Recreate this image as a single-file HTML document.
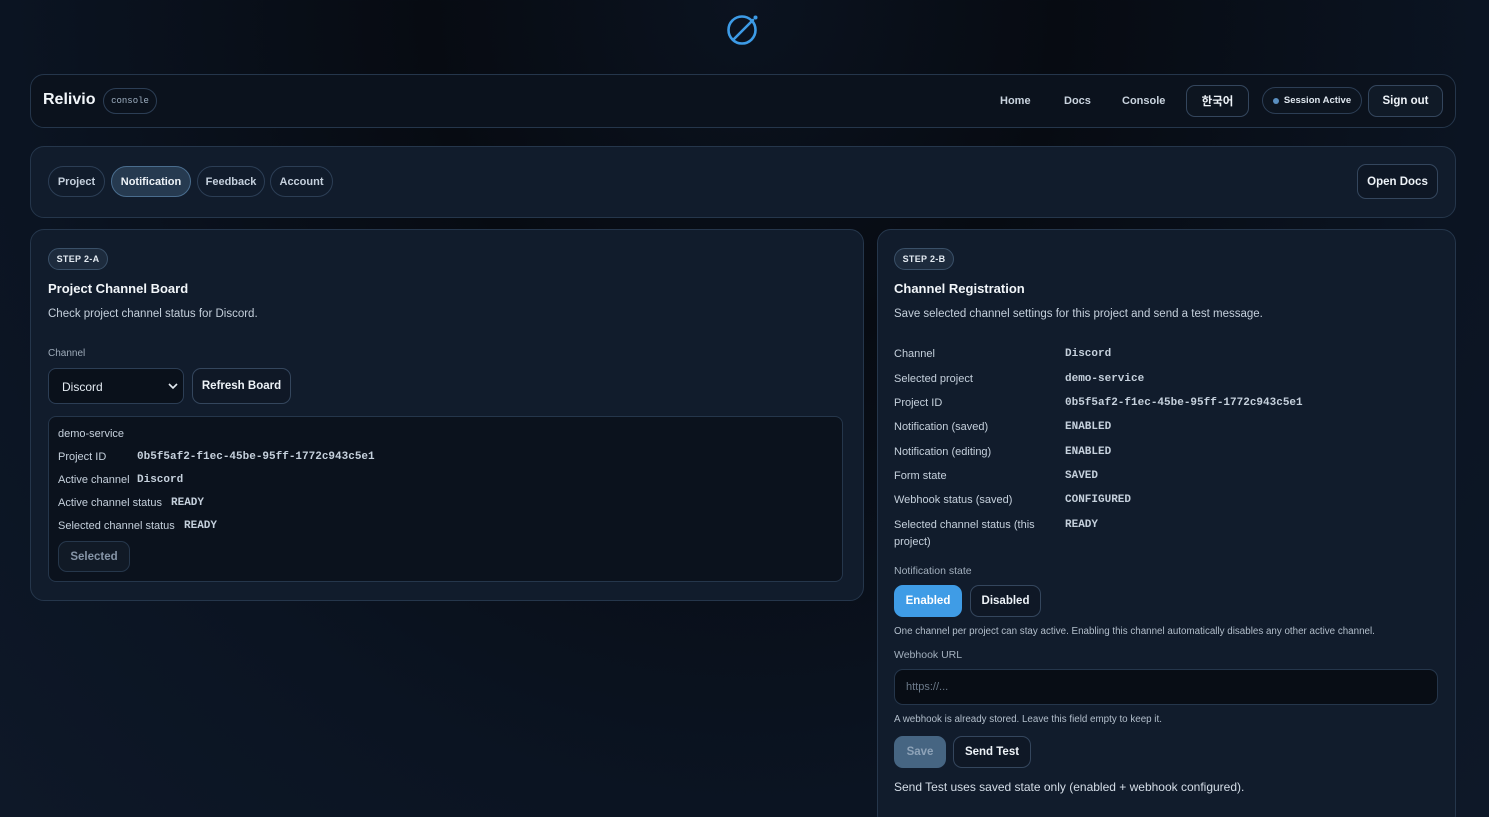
<!DOCTYPE html>
<html style="overflow:hidden"><head><meta charset="utf-8"><style>
*{box-sizing:border-box;margin:0;padding:0}
html,body{width:1489px;height:817px;overflow:hidden}
body{background:radial-gradient(ellipse at 50% 0%,#0b1320 0%,#070b12 30%,#0b1422 70%,#0e1828 100%);font-family:"Liberation Sans","Noto Sans CJK KR",sans-serif;color:#dce4ee;position:relative}
.abs{position:absolute}
.card{position:absolute;border:1px solid #25364b;border-radius:14px}
.pill{position:absolute;border:1px solid #2c3e55;border-radius:16px;font-size:11px;font-weight:bold;color:#c5d0dd;display:flex;align-items:center;justify-content:center}
.btn{position:absolute;border:1px solid #34465d;border-radius:9px;font-size:11.5px;font-weight:bold;color:#eef3f8;display:flex;align-items:center;justify-content:center;background:#0f1826}
.mono{font-family:"Liberation Mono",monospace;font-weight:bold;font-size:10.6px;color:#eef3f8}
.t{position:absolute;font-size:11px;color:#c5d0dc;white-space:nowrap}
.h{position:absolute;font-size:13px;font-weight:bold;color:#f2f6fa}
.step{position:absolute;height:22px;border:1px solid #3a5068;background:#1d2b3d;border-radius:11px;font-size:9px;font-weight:bold;color:#e4ebf2;display:flex;align-items:center;justify-content:center;letter-spacing:.3px}
</style></head><body>
<svg class="abs" style="left:724px;top:12px" width="36" height="36" viewBox="0 0 36 36"><circle cx="18" cy="18" r="13.5" fill="none" stroke="#3d9be6" stroke-width="2.6"/><line x1="9" y1="28" x2="29" y2="8" stroke="#3d9be6" stroke-width="2.6" stroke-linecap="round"/><circle cx="31.5" cy="5.5" r="2" fill="#3d9be6"/></svg>

<div class="card" style="left:30px;top:74px;width:1426px;height:54px;background:#0b121d"></div>
<div class="h" style="left:43px;top:91px;font-size:16px">Relivio</div>
<div class="pill" style="left:103px;top:88px;width:54px;height:26px;font-family:'Liberation Mono',monospace;font-weight:normal;font-size:9px;color:#9fb0c2">console</div>
<div class="t" style="left:1000px;top:95px;font-weight:bold;color:#c9d3de">Home</div>
<div class="t" style="left:1064px;top:95px;font-weight:bold;color:#c9d3de">Docs</div>
<div class="t" style="left:1122px;top:95px;font-weight:bold;color:#c9d3de">Console</div>
<div class="btn" style="left:1186px;top:85px;width:63px;height:32px;background:#0d1520">한국어</div>
<div class="pill" style="left:1262px;top:87px;width:100px;height:27px;font-size:9.5px;color:#dfe7ef;background:#0d1520"><span style="width:6px;height:6px;border-radius:3px;background:#5a8fc0;margin-right:5px;display:inline-block"></span>Session Active</div>
<div class="btn" style="left:1368px;top:85px;width:75px;height:32px;background:#101a27">Sign out</div>

<div class="card" style="left:30px;top:146px;width:1426px;height:72px;background:#111c2c"></div>
<div class="pill" style="left:48px;top:166px;width:57px;height:31px">Project</div>
<div class="pill" style="left:111px;top:166px;width:80px;height:31px;background:#263a50;border-color:#4a6d8e;color:#eef3f8">Notification</div>
<div class="pill" style="left:197px;top:166px;width:68px;height:31px">Feedback</div>
<div class="pill" style="left:270px;top:166px;width:63px;height:31px">Account</div>
<div class="btn" style="left:1357px;top:164px;width:81px;height:35px;background:#0e1725">Open Docs</div>

<div class="card" style="left:30px;top:229px;width:834px;height:372px;background:#111c2c"></div>
<div class="step" style="left:48px;top:248px;width:60px">STEP 2-A</div>
<div class="h" style="left:48px;top:281px">Project Channel Board</div>
<div class="t" style="left:48px;top:308px;font-size:11.5px">Check project channel status for Discord.</div>
<div class="t" style="left:48px;top:348px;font-size:10px;color:#9eabb9">Channel</div>
<div class="abs" style="left:48px;top:368px;width:136px;height:36px;border:1px solid #2c3e55;border-radius:8px;background:#0a111b;font-size:12px;color:#e4ebf2;padding:11px 13px">Discord<svg style="position:absolute;right:5px;top:14px" width="10" height="7" viewBox="0 0 10 7"><path d="M1 1l4 4 4-4" fill="none" stroke="#e4ebf2" stroke-width="1.6"/></svg></div>
<div class="btn" style="left:192px;top:368px;width:99px;height:36px">Refresh Board</div>
<div class="abs" style="left:48px;top:416px;width:795px;height:166px;border:1px solid #25364b;border-radius:8px;background:#0b121d"></div>
<div class="t" style="left:58px;top:428px">demo-service</div>
<div class="t" style="left:58px;top:451px">Project ID</div><div class="t mono" style="left:137px;top:451px">0b5f5af2-f1ec-45be-95ff-1772c943c5e1</div>
<div class="t" style="left:58px;top:474px">Active channel</div><div class="t mono" style="left:137px;top:474px">Discord</div>
<div class="t" style="left:58px;top:497px">Active channel status</div><div class="t mono" style="left:171px;top:497px">READY</div>
<div class="t" style="left:58px;top:520px">Selected channel status</div><div class="t mono" style="left:184px;top:520px">READY</div>
<div class="btn" style="left:58px;top:541px;width:72px;height:31px;color:#8695a7;border-color:#26374b;background:#111a26">Selected</div>

<div class="card" style="left:877px;top:229px;width:579px;height:600px;background:#111c2c"></div>
<div class="step" style="left:894px;top:248px;width:60px">STEP 2-B</div>
<div class="h" style="left:894px;top:281px">Channel Registration</div>
<div class="t" style="left:894px;top:308px;font-size:11.5px">Save selected channel settings for this project and send a test message.</div>
<div class="t" style="left:894px;top:348px">Channel</div><div class="t mono" style="left:1065px;top:348px">Discord</div>
<div class="t" style="left:894px;top:373px">Selected project</div><div class="t mono" style="left:1065px;top:373px">demo-service</div>
<div class="t" style="left:894px;top:397px">Project ID</div><div class="t mono" style="left:1065px;top:397px">0b5f5af2-f1ec-45be-95ff-1772c943c5e1</div>
<div class="t" style="left:894px;top:421px">Notification (saved)</div><div class="t mono" style="left:1065px;top:421px">ENABLED</div>
<div class="t" style="left:894px;top:446px">Notification (editing)</div><div class="t mono" style="left:1065px;top:446px">ENABLED</div>
<div class="t" style="left:894px;top:470px">Form state</div><div class="t mono" style="left:1065px;top:470px">SAVED</div>
<div class="t" style="left:894px;top:494px">Webhook status (saved)</div><div class="t mono" style="left:1065px;top:494px">CONFIGURED</div>
<div class="t" style="left:894px;top:519px">Selected channel status (this</div><div class="t mono" style="left:1065px;top:519px">READY</div>
<div class="t" style="left:894px;top:536px">project)</div>
<div class="t" style="left:894px;top:565px;font-size:10.5px;color:#a3b0be">Notification state</div>
<div class="btn" style="left:894px;top:585px;width:68px;height:32px;background:#3f9ce6;border-color:#3f9ce6;color:#fff">Enabled</div>
<div class="btn" style="left:970px;top:585px;width:71px;height:32px">Disabled</div>
<div class="t" style="left:894px;top:626px;font-size:9.8px;color:#b3bfcc">One channel per project can stay active. Enabling this channel automatically disables any other active channel.</div>
<div class="t" style="left:894px;top:649px;font-size:10.5px;color:#a3b0be">Webhook URL</div>
<div class="abs" style="left:894px;top:669px;width:544px;height:36px;border:1px solid #25364b;border-radius:9px;background:#080d15;font-size:11px;color:#6c7a8a;padding:11px 11px">https://...</div>
<div class="t" style="left:894px;top:714px;font-size:9.8px;color:#b3bfcc">A webhook is already stored. Leave this field empty to keep it.</div>
<div class="btn" style="left:894px;top:736px;width:52px;height:32px;background:#466582;border-color:#466582;color:#8ea3b8">Save</div>
<div class="btn" style="left:953px;top:736px;width:78px;height:32px">Send Test</div>
<div class="t" style="left:894px;top:780px;font-size:12px;color:#d4dde7">Send Test uses saved state only (enabled + webhook configured).</div>
</body></html>
